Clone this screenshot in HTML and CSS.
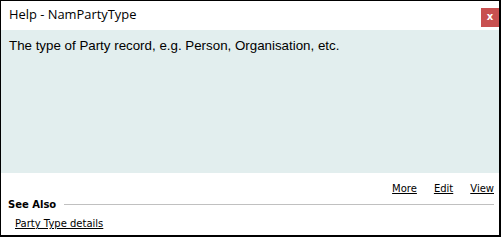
FILE: index.html
```html
<!DOCTYPE html>
<html>
<head>
<meta charset="utf-8">
<link rel="stylesheet" href="styles.css">
</head>
<body>
<div class="window">
  <div class="titlebar">
    <span class="title">Help - NamPartyType</span>
    <span class="close">x</span>
  </div>
  <div class="content">The type of Party record, e.g. Person, Organisation, etc.</div>
  <div class="footer">
    <div class="actions">
      <a href="#">More</a>
      <a href="#">Edit</a>
      <a href="#">View</a>
    </div>
    <div class="seealso">
      <span class="seealso-label">See Also</span>
      <span class="rule"></span>
    </div>
    <div class="related"><a href="#">Party Type details</a></div>
  </div>
</div>
</body>
</html>
```
FILE: styles.css
```css
html, body {
  margin: 0;
  padding: 0;
  background: #ffffff;
}
.window {
  width: 501px;
  height: 237px;
  box-sizing: border-box;
  border-top: 1px solid #000;
  border-left: 1px solid #000;
  border-right: 2px solid #000;
  border-bottom: 2px solid #000;
  display: flex;
  flex-direction: column;
  background: #fff;
}
.titlebar {
  height: 29px;
  display: flex;
  align-items: flex-start;
  justify-content: space-between;
}
.title {
  font-family: "Open Sans", "DejaVu Sans", sans-serif;
  font-size: 12.9px;
  color: #000;
  margin: 5px 0 0 8px;
  line-height: 17px;
}
.close {
  margin-top: 7px;
  width: 18px;
  height: 19px;
  background: #c85050;
  color: #fff;
  font-family: "DejaVu Sans", sans-serif;
  font-weight: bold;
  font-size: 10px;
  line-height: 18px;
  text-align: center;
}
.content {
  height: 143px;
  background: #e2eeee;
  font-family: "Liberation Sans", Arial, sans-serif;
  font-size: 13.33px;
  color: #000;
  padding: 8px 0 0 8px;
  box-sizing: border-box;
}
.footer {
  flex: 1;
  font-family: "DejaVu Sans", Tahoma, sans-serif;
  font-size: 10px;
}
.footer a {
  color: #000;
  text-decoration: underline;
}
.actions {
  display: flex;
  justify-content: flex-end;
  gap: 17px;
  padding: 9px 5px 0 0;
  line-height: 13px;
}
.seealso {
  display: flex;
  align-items: center;
  margin-top: 2px;
  padding: 0 5px 0 7px;
  height: 15px;
}
.seealso-label {
  font-weight: bold;
  margin-right: 8px;
}
.rule {
  flex: 1;
  height: 1px;
  background: #c0c0c0;
}
.related {
  padding: 5px 0 0 14px;
  line-height: 13px;
}
```
